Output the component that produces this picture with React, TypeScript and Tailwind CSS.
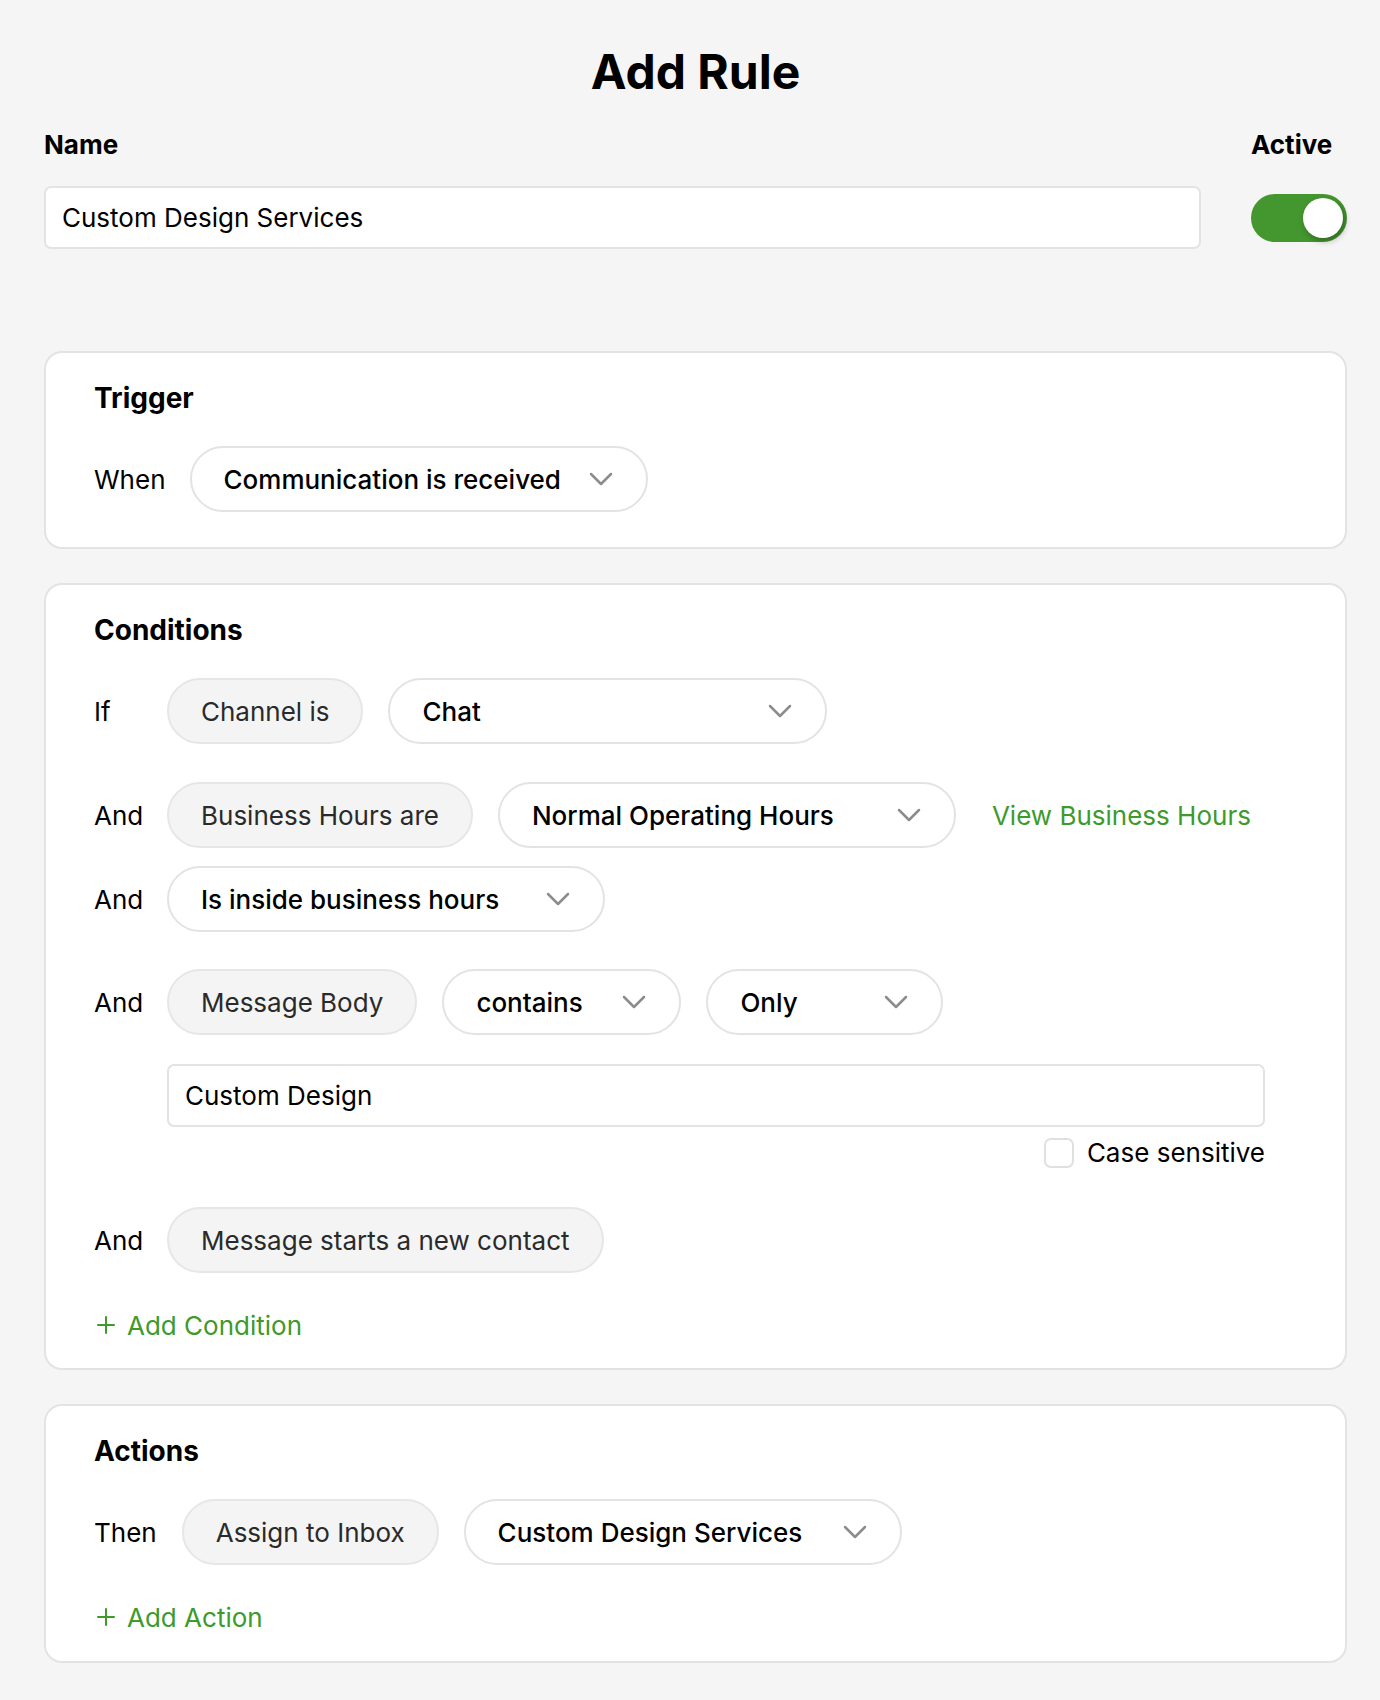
import React from "react";

const Chevron = () => (
  <svg width="24" height="14" viewBox="0 0 24 14" fill="none" className="shrink-0">
    <path d="M2 2L12 12L22 2" stroke="#8c8c8c" strokeWidth="2.5" strokeLinecap="round" strokeLinejoin="round" />
  </svg>
);

const Plus = () => (
  <svg width="18" height="18" viewBox="0 0 18 18" fill="none" className="shrink-0">
    <path d="M9 1V17M1 9H17" stroke="#3d9a2b" strokeWidth="2" strokeLinecap="round" />
  </svg>
);

function Select({ label, className }: { label: string; className: string }) {
  return (
    <div
      className={`flex h-[66px] shrink-0 items-center justify-between gap-[28px] rounded-full border-2 border-[#e3e3e3] bg-white pl-[32px] pr-[33px] text-[26px] font-medium text-black ${className}`}
    >
      <span className="whitespace-nowrap">{label}</span>
      <Chevron />
    </div>
  );
}

function Tag({ label }: { label: string }) {
  return (
    <div className="flex h-[66px] shrink-0 items-center whitespace-nowrap rounded-full border-2 border-[#e6e6e6] bg-[#f4f4f4] px-[32px] text-[26px] text-[#2a2a2a]">
      {label}
    </div>
  );
}

function CondLabel({ children }: { children: React.ReactNode }) {
  return <div className="w-[73px] shrink-0 text-[26px]">{children}</div>;
}

export default function App() {
  return (
    <div className="min-h-[1700px] bg-[#f5f5f5] pb-[37px] pl-[44px] pr-[33px] pt-[43px] font-['Inter',sans-serif] text-black">
      <h1 className="text-center text-[48px] font-bold leading-[58px]">Add Rule</h1>

      <div className="mt-[28px] flex gap-[50px]">
        <div className="flex-1">
          <div className="text-[26px] font-bold leading-[32px]">Name</div>
          <input
            readOnly
            value="Custom Design Services"
            className="mt-[25px] h-[63px] w-full rounded-[7px] border-2 border-[#e3e3e3] bg-white px-[16px] text-[26px] text-black outline-none"
          />
        </div>
        <div className="w-[96px] shrink-0">
          <div className="text-[26px] font-bold leading-[32px]">Active</div>
          <div className="mt-[25px] flex h-[63px] items-center">
            <div className="flex h-[48px] w-[96px] items-center justify-end rounded-full bg-[#44962f] p-[4px]">
              <div className="h-[40px] w-[40px] rounded-full bg-white shadow-[2px_3px_6px_rgba(0,0,0,0.3)]" />
            </div>
          </div>
        </div>
      </div>

      {/* Trigger */}
      <section className="mt-[102px] rounded-[18px] border-2 border-[#e3e3e3] bg-white pb-[35px] pl-[48px] pr-[48px] pt-[29px]">
        <h2 className="text-[28px] font-bold leading-[32px]">Trigger</h2>
        <div className="mt-[32px] flex items-center gap-[24px]">
          <div className="text-[26px]">When</div>
          <Select label="Communication is received" className="w-[458px]" />
        </div>
      </section>

      {/* Conditions */}
      <section className="mt-[34px] rounded-[18px] border-2 border-[#e3e3e3] bg-white pb-[25px] pl-[48px] pr-[80px] pt-[29px]">
        <h2 className="text-[28px] font-bold leading-[32px]">Conditions</h2>

        <div className="mt-[32px] flex items-center">
          <CondLabel>If</CondLabel>
          <div className="flex items-center gap-[25px]">
            <Tag label="Channel is" />
            <Select label="Chat" className="w-[439px]" />
          </div>
        </div>

        <div className="mt-[38px] flex items-center">
          <CondLabel>And</CondLabel>
          <div className="flex items-center gap-[25px]">
            <Tag label="Business Hours are" />
            <Select label="Normal Operating Hours" className="w-[458px]" />
            <a className="ml-[11px] whitespace-nowrap text-[26px] text-[#3d9a2b]">View Business Hours</a>
          </div>
        </div>

        <div className="mt-[18px] flex items-center">
          <CondLabel>And</CondLabel>
          <Select label="Is inside business hours" className="w-[438px]" />
        </div>

        <div className="mt-[37px] flex items-center">
          <CondLabel>And</CondLabel>
          <div className="flex items-center gap-[25px]">
            <Tag label="Message Body" />
            <Select label="contains" className="w-[239px]" />
            <Select label="Only" className="w-[237px]" />
          </div>
        </div>

        <div className="ml-[73px]">
          <input
            readOnly
            value="Custom Design"
            className="mt-[29px] h-[63px] w-full rounded-[7px] border-2 border-[#e3e3e3] bg-white px-[16px] text-[26px] text-black outline-none"
          />
          <div className="mt-[11px] flex items-center justify-end gap-[13px]">
            <div className="h-[30px] w-[30px] rounded-[7px] border-2 border-[#e0e0e0] bg-white" />
            <span className="text-[26px] leading-[30px]">Case sensitive</span>
          </div>
        </div>

        <div className="mt-[39px] flex items-center">
          <CondLabel>And</CondLabel>
          <Tag label="Message starts a new contact" />
        </div>

        <div className="mt-[34px] flex h-[36px] items-center gap-[12px] pl-[3px] text-[26px] text-[#3d9a2b]">
          <Plus />
          <span>Add Condition</span>
        </div>
      </section>

      {/* Actions */}
      <section className="mt-[34px] rounded-[18px] border-2 border-[#e3e3e3] bg-white pb-[26px] pl-[48px] pr-[48px] pt-[29px]">
        <h2 className="text-[28px] font-bold leading-[32px]">Actions</h2>
        <div className="mt-[32px] flex items-center gap-[25px]">
          <div className="text-[26px]">Then</div>
          <Tag label="Assign to Inbox" />
          <Select label="Custom Design Services" className="w-[438px]" />
        </div>
        <div className="mt-[34px] flex h-[36px] items-center gap-[12px] pl-[3px] text-[26px] text-[#3d9a2b]">
          <Plus />
          <span>Add Action</span>
        </div>
      </section>
    </div>
  );
}
